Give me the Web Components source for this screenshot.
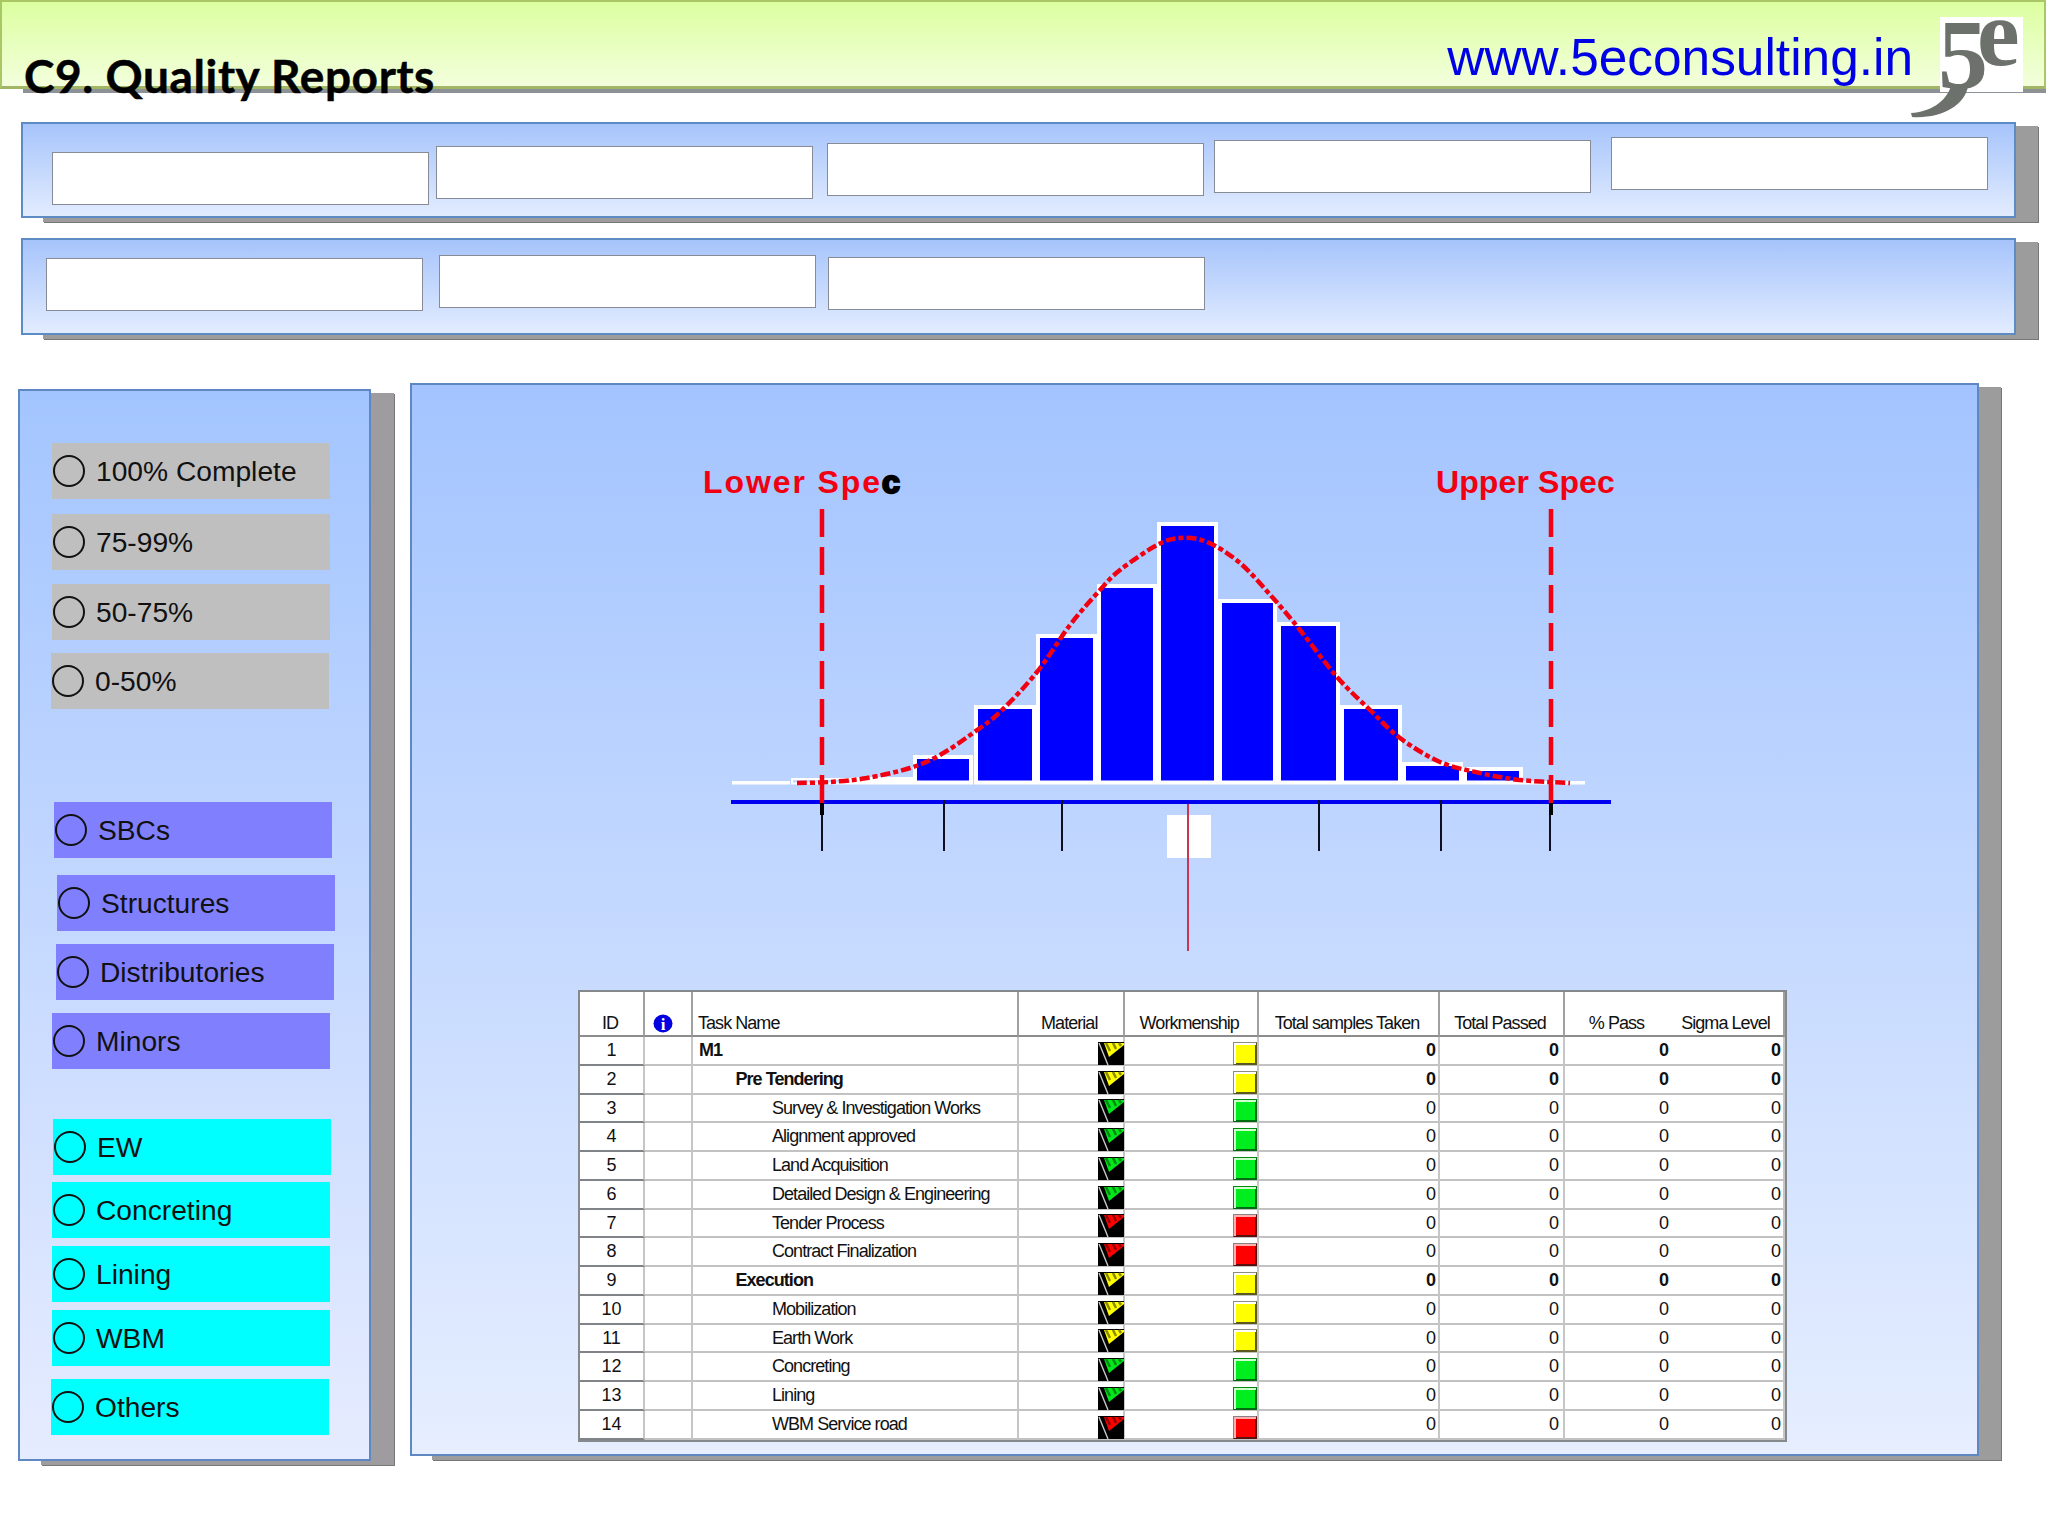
<!DOCTYPE html>
<html lang="en">
<head>
<meta charset="utf-8">
<title>C9. Quality Reports</title>
<style>
  html, body { margin: 0; background: #fff; }
  body { width: 2048px; height: 1536px; overflow: hidden; font-family: "Liberation Sans", Arial, sans-serif; }
  .work-row { display: flex; align-items: flex-start; margin-top: 48px; }
</style>
</head>
<body>
<page-header heading="C9. Quality Reports" site="www.5econsulting.in"></page-header>

<filter-band style="margin-top: 29px; height: 96px">
  <blank-field style="margin: 28px 0 0 29px"></blank-field>
  <blank-field style="margin: 22px 0 0 7px"></blank-field>
  <blank-field style="margin: 19px 0 0 14px"></blank-field>
  <blank-field style="margin: 16px 0 0 10px"></blank-field>
  <blank-field style="margin: 13px 0 0 20px"></blank-field>
</filter-band>
<filter-band style="margin-top: 20px; height: 97px">
  <blank-field style="margin: 18px 0 0 23px"></blank-field>
  <blank-field style="margin: 15px 0 0 16px"></blank-field>
  <blank-field style="margin: 17px 0 0 12px"></blank-field>
</filter-band>

<div class="work-row">
  <side-panel>
    <status-option tone="grey" style="margin: 52px 0 0 32px">100% Complete</status-option>
    <status-option tone="grey" style="margin: 15px 0 0 32px">75-99%</status-option>
    <status-option tone="grey" style="margin: 14px 0 0 32px">50-75%</status-option>
    <status-option tone="grey" style="margin: 13px 0 0 31px">0-50%</status-option>
    <status-option tone="violet" style="margin: 93px 0 0 34px">SBCs</status-option>
    <status-option tone="violet" style="margin: 17px 0 0 37px">Structures</status-option>
    <status-option tone="violet" style="margin: 13px 0 0 36px">Distributories</status-option>
    <status-option tone="violet" style="margin: 13px 0 0 32px">Minors</status-option>
    <status-option tone="cyan" style="margin: 50px 0 0 33px">EW</status-option>
    <status-option tone="cyan" style="margin: 7px 0 0 32px">Concreting</status-option>
    <status-option tone="cyan" style="margin: 8px 0 0 32px">Lining</status-option>
    <status-option tone="cyan" style="margin: 8px 0 0 32px">WBM</status-option>
    <status-option tone="cyan" style="margin: 13px 0 0 31px">Others</status-option>
  </side-panel>
  <main-panel>
    <quality-chart></quality-chart>
    <report-table></report-table>
  </main-panel>
</div>

<script>
class PageHeader extends HTMLElement {
  constructor() {
    super()
    this.attachShadow({ mode: 'open' })
    this.shadowRoot.innerHTML = `
      <style>
        :host { display: block; position: relative; height: 93px; width: 2046px; }
        .bar {
          box-sizing: border-box;
          height: 89px;
          display: flex;
          justify-content: space-between;
          border: 2px solid #a9c765;
          border-bottom: 3px solid #a3b665;
          background: linear-gradient(#dcffa0, #f3ffdc);
        }
        .strip {
          position: absolute;
          left: 23px;
          right: 0;
          top: 89px;
          height: 4px;
          background: #8d9296;
        }
        h1 {
          position: relative;
          z-index: 1;
          margin: 46px 0 0 22px;
          font: 700 46px/56px Lato, "Open Sans", sans-serif;
          letter-spacing: 0.6px;
          -webkit-text-stroke: 0.5px #000;
          color: #000;
          height: 0;
          white-space: nowrap;
        }
        .site {
          margin: 25px 131px 0 0;
          font: 51.4px/60px "Liberation Sans", Arial, sans-serif;
          color: #0000e6;
        }
        .logo {
          position: absolute;
          left: 1940px;
          top: 17px;
          width: 83px;
          height: 75px;
          background: #fff;
          color: #6c716c;
          font-family: "Liberation Serif", serif;
          font-weight: 700;
        }
        .logo span { position: absolute; display: block; white-space: nowrap; }
        .five { left: -2px; top: 3px; width: 37px; height: 70px; font-size: 100px; line-height: 70px; }
        .ee { left: 37px; top: -9px; width: 44px; height: 50px; font-size: 96px; line-height: 50px; }
        svg { position: absolute; left: 1905px; top: 80px; }
      </style>
      <div class="bar">
        <h1></h1>
        <div class="site"></div>
      </div>
      <div class="strip"></div>
      <div class="logo"><span class="five">5</span><span class="ee">e</span></div>
      <svg width="80" height="42" viewBox="1905 80 80 42">
        <path fill="#6c716c" d="M1968,86 C1965,106 1940,119 1912,117 L1911,113 C1930,112 1946,102 1951,86Z"/>
      </svg>
    `
  }

  connectedCallback() {
    this.shadowRoot.querySelector('h1').textContent = this.getAttribute('heading')
    this.shadowRoot.querySelector('.site').textContent = this.getAttribute('site')
  }
}

class FilterBand extends HTMLElement {
  constructor() {
    super()
    this.attachShadow({ mode: 'open' })
    this.shadowRoot.innerHTML = `
      <style>
        :host {
          display: flex;
          align-items: flex-start;
          box-sizing: border-box;
          width: 1995px;
          margin-left: 21px;
          border: 2px solid #5d8cc4;
          background: linear-gradient(#a6c4fb, #e2ecff);
          box-shadow: 22px 4px 0 0 #9c9c9c, 23px 5px 0 0 #777;
        }
      </style>
      <slot></slot>
    `
  }
}

class BlankField extends HTMLElement {
  constructor() {
    super()
    this.attachShadow({ mode: 'open' })
    this.shadowRoot.innerHTML = `
      <style>
        :host {
          display: block;
          box-sizing: border-box;
          flex: none;
          width: 377px;
          height: 53px;
          background: #fff;
          border: 1px solid #868b96;
        }
      </style>
    `
  }
}

class SidePanel extends HTMLElement {
  constructor() {
    super()
    this.attachShadow({ mode: 'open' })
    this.shadowRoot.innerHTML = `
      <style>
        :host {
          display: block;
          flex: none;
          box-sizing: border-box;
          width: 353px;
          height: 1072px;
          margin: 6px 0 0 18px;
          border: 2px solid #5f88c2;
          background: linear-gradient(#a3c5ff, #e6ecff);
          box-shadow: 23px 4px 0 0 #9e9c9e, 24px 5px 0 0 #777;
        }
      </style>
      <slot></slot>
    `
  }
}

class StatusOption extends HTMLElement {
  constructor() {
    super()
    this.attachShadow({ mode: 'open' })
    this.shadowRoot.innerHTML = `
      <style>
        :host {
          display: flex;
          align-items: center;
          gap: 11px;
          box-sizing: border-box;
          width: 278px;
          height: 56px;
          padding: 0 0 1px 1px;
          font: 28.2px/32px "Liberation Sans", Arial, sans-serif;
          color: #111;
        }
        :host([tone="grey"]) { background: #c0bfc0; }
        :host([tone="violet"]) { background: #8080ff; }
        :host([tone="cyan"]) { background: #00ffff; }
        .dot {
          box-sizing: border-box;
          flex: none;
          width: 32px;
          height: 32px;
          border: 2.5px solid #111;
          border-radius: 50%;
        }
      </style>
      <span class="dot"></span><slot></slot>
    `
  }
}

class MainPanel extends HTMLElement {
  constructor() {
    super()
    this.attachShadow({ mode: 'open' })
    this.shadowRoot.innerHTML = `
      <style>
        :host {
          display: block;
          flex: none;
          box-sizing: border-box;
          width: 1569px;
          height: 1073px;
          margin-left: 39px;
          border: 2px solid #5f88c2;
          background: linear-gradient(#a3c4ff, #e6eeff);
          box-shadow: 22px 4px 0 0 #9c9c9c, 23px 5px 0 0 #777;
        }
      </style>
      <slot></slot>
    `
  }
}

class QualityChart extends HTMLElement {
  constructor() {
    super()
    this.attachShadow({ mode: 'open' })
    const bars = [
      [732, 790, 781, 1], [791, 852, 778, 1], [852, 913, 777], [913, 973, 755],
      [974, 1036, 705], [1036, 1097, 634], [1097, 1157, 584], [1157, 1218, 522],
      [1218, 1277, 599], [1277, 1340, 622], [1340, 1402, 705], [1402, 1463, 762],
      [1463, 1523, 767], [1523, 1585, 781, 1],
    ]
    const curve = [
      [797, 783], [830, 782], [867, 778], [910, 768], [940, 755], [973, 733],
      [1000, 712], [1037, 672], [1070, 625], [1100, 590], [1120, 570], [1157, 545],
      [1180, 538], [1207, 542], [1240, 563], [1273, 598], [1300, 630], [1337, 677],
      [1370, 710], [1400, 738], [1440, 762], [1480, 773], [1520, 780], [1570, 783],
    ]
    const ticks = [822, 944, 1062, 1319, 1441, 1550]
    const barMarkup = bars
      .map(([left, right, top, hollow]) => {
        const inset = hollow ? 1 : 2
        return `<rect x="${left + inset}" y="${top + inset}" width="${right - left - inset * 2}"
          height="${784.5 - top - inset * 2}" fill="${hollow ? '#c8daff' : '#0000ff'}"
          stroke="#fff" stroke-width="${inset * 2}"/>`
      })
      .join('')
    const tickMarkup = ticks
      .map((x) => `<line x1="${x}" x2="${x}" y1="800" y2="851" stroke="#0c1020" stroke-width="2"/>`)
      .join('')

    this.shadowRoot.innerHTML = `
      <style>
        :host { display: block; height: 585px; }
        svg { display: block; }
        text { font: 700 32px "Liberation Sans", Arial, sans-serif; fill: #f00010; }
      </style>
      <svg width="1565" height="585" viewBox="412 385 1565 585">
        <text x="703" y="493" letter-spacing="1.9">Lower Spe<tspan stroke="#000" stroke-width="2.4" style="fill:#000">c</tspan></text>
        <text x="1436" y="493" letter-spacing="0.1">Upper Spec</text>
        ${barMarkup}
        <rect x="731" y="800" width="880" height="4" fill="#0000f0"/>
        ${tickMarkup}
        <rect x="820" y="803" width="4" height="12" fill="#000"/>
        <rect x="1549" y="803" width="4" height="12" fill="#000"/>
        <line x1="822" x2="822" y1="509" y2="803" stroke="#f00010" stroke-width="4.5" stroke-dasharray="28 10"/>
        <line x1="1551" x2="1551" y1="509" y2="803" stroke="#f00010" stroke-width="4.5" stroke-dasharray="28 10"/>
        <rect x="1167" y="815" width="44" height="43" fill="#fff"/>
        <line x1="1188" x2="1188" y1="804" y2="951" stroke="#cc3355" stroke-width="2"/>
        <path d="${QualityChart.smooth(curve)}" fill="none" stroke="#f00010" stroke-width="4.5"
          stroke-dasharray="10 3 5 3"/>
      </svg>
    `
  }

  // catmull-rom through the measured points
  static smooth(points) {
    let d = `M${points[0][0]},${points[0][1]}`
    for (let i = 0; i < points.length - 1; i++) {
      const p0 = points[i - 1] || points[i]
      const p1 = points[i]
      const p2 = points[i + 1]
      const p3 = points[i + 2] || p2
      const c1x = p1[0] + (p2[0] - p0[0]) / 6
      const c1y = p1[1] + (p2[1] - p0[1]) / 6
      const c2x = p2[0] - (p3[0] - p1[0]) / 6
      const c2y = p2[1] - (p3[1] - p1[1]) / 6
      d += ` C${c1x},${c1y} ${c2x},${c2y} ${p2[0]},${p2[1]}`
    }
    return d
  }
}

const toneColors = {
  yellow: { fill: '#ffff00', stripe: '#8a8a00' },
  green: { fill: '#00e81a', stripe: '#008a10' },
  red: { fill: '#ff0000', stripe: '#900000' },
}

class FlagIcon extends HTMLElement {
  constructor() {
    super()
    this.attachShadow({ mode: 'open' })
  }

  connectedCallback() {
    const { fill, stripe } = toneColors[this.getAttribute('tone')]
    this.shadowRoot.innerHTML = `
      <style>
        :host { display: block; width: 26px; height: 23px; flex: none; }
        svg { display: block; }
      </style>
      <svg width="26" height="23" viewBox="0 0 26 23">
        <rect width="26" height="23" fill="#000"/>
        <path d="M6,1 H26 V3 L11,15Z" fill="${fill}"/>
        <path d="M8,1 L12,9 M15,1 L18,7 M21,1 L23,4" stroke="${stripe}" stroke-width="2.5" fill="none"/>
        <path d="M1,1 L10,23" stroke="#c8c8c8" stroke-width="1.4"/>
      </svg>
    `
  }
}

const squareEdges = {
  yellow: { light: '#fff', mid: '#8c8c80', dark: '#5a5a20' },
  green: { light: '#d0ffd0', mid: '#008a10', dark: '#006a10' },
  red: { light: '#ffb0b0', mid: '#8c8080', dark: '#5a1010' },
}

class StatusSquare extends HTMLElement {
  constructor() {
    super()
    this.attachShadow({ mode: 'open' })
  }

  connectedCallback() {
    const tone = this.getAttribute('tone')
    const edge = squareEdges[tone]
    this.shadowRoot.innerHTML = `
      <style>
        :host {
          display: block;
          flex: none;
          box-sizing: border-box;
          width: 24px;
          height: 23px;
          border: 1.5px solid ${edge.dark};
          border-top-color: ${edge.mid};
          border-left-color: ${edge.mid};
          background: ${tone === 'green' ? '#00ee20' : toneColors[tone].fill};
          box-shadow: inset 2px 2px 0 0 ${edge.light}, inset -1px -1px 0 0 ${edge.dark};
        }
      </style>
    `
  }
}

class ReportTable extends HTMLElement {
  constructor() {
    super()
    this.attachShadow({ mode: 'open' })
    const rows = [
      ['M1', 0, 'yellow', true],
      ['Pre Tendering', 1, 'yellow', true],
      ['Survey & Investigation Works', 2, 'green'],
      ['Alignment approved', 2, 'green'],
      ['Land Acquisition', 2, 'green'],
      ['Detailed Design & Engineering', 2, 'green'],
      ['Tender Process', 2, 'red'],
      ['Contract Finalization', 2, 'red'],
      ['Execution', 1, 'yellow', true],
      ['Mobilization', 2, 'yellow'],
      ['Earth Work', 2, 'yellow'],
      ['Concreting', 2, 'green'],
      ['Lining', 2, 'green'],
      ['WBM Service road', 2, 'red'],
    ]
    const heads = ['ID', '', 'Task Name', 'Material', 'Workmenship', 'Total samples Taken', 'Total Passed', '% Pass', 'Sigma Level']
    const headMarkup = heads
      .map((text, i) => {
        if (i === 1) {
          return `<div class="head mid"><svg width="20" height="19" viewBox="0 0 20 19">
            <ellipse cx="10" cy="9.5" rx="9.5" ry="9" fill="#0000e0"/>
            <text x="10" y="15.5" text-anchor="middle">i</text></svg></div>`
        }
        return `<div class="head ${i === 2 ? '' : 'mid'}">${text}</div>`
      })
      .join('')
    const rowMarkup = rows
      .map(([name, depth, tone, bold], i) => {
        const weight = bold ? 'bold' : ''
        const zeros = [0, 1, 2, 3].map(() => `<div class="cell num ${weight}">0</div>`).join('')
        return `
          <div class="cell id">${i + 1}</div>
          <div class="cell"></div>
          <div class="cell ${weight}" style="padding-left: ${6 + depth * 36.5}px">${name.replace('&', '&amp;')}</div>
          <div class="cell icon"><flag-icon tone="${tone}"></flag-icon></div>
          <div class="cell icon"><status-square tone="${tone}"></status-square></div>
          ${zeros}`
      })
      .join('')

    this.shadowRoot.innerHTML = `
      <style>
        :host {
          display: grid;
          box-sizing: border-box;
          width: 1209px;
          margin: 20px 0 0 166px;
          grid-template-columns: 65px 48px 326px 105.5px 134.5px 181px 125px 106px 114px;
          grid-template-rows: 45px repeat(14, 28.75px);
          border: 2px solid #85898c;
          background: #fff;
          font: 18px/18px "Liberation Sans", Arial, sans-serif;
          letter-spacing: -0.95px;
          color: #111;
        }
        .head, .cell {
          box-sizing: border-box;
          border-right: 2px solid #c6c6c6;
          border-bottom: 2px solid #c2c2c2;
          white-space: nowrap;
          min-width: 0;
        }
        .head {
          display: flex;
          align-items: flex-end;
          padding: 0 0 3px 5px;
          border-right-color: #a0a0a0;
          border-bottom-color: #8c8c8c;
        }
        .mid { justify-content: center; padding-left: 0; padding-right: 3px; }
        .head:nth-child(1) { padding-right: 0; }
        .head:nth-child(9), .cell:nth-child(9n) { border-right: 0; }
        .head svg { display: block; margin: 0 7px -1px 0; }
        .head text { font: 700 17px "Liberation Serif", serif; fill: #fff; letter-spacing: 0; }
        .cell { padding-top: 4px; }
        .id { text-align: center; border-bottom-color: #808488; letter-spacing: 0; }
        .num { text-align: right; padding-right: 2px; letter-spacing: 0; }
        .num:nth-child(9n+8) { padding-right: 4px; }
        .bold { font-weight: 700; }
        .icon {
          display: flex;
          justify-content: flex-end;
          align-items: flex-end;
          padding-top: 0;
          overflow: visible;
        }
        .icon > * { margin-bottom: -1px; }
        .icon > flag-icon { margin-right: -1px; }
      </style>
      ${headMarkup}${rowMarkup}
    `
  }
}

customElements.define('page-header', PageHeader)
customElements.define('filter-band', FilterBand)
customElements.define('blank-field', BlankField)
customElements.define('side-panel', SidePanel)
customElements.define('status-option', StatusOption)
customElements.define('main-panel', MainPanel)
customElements.define('quality-chart', QualityChart)
customElements.define('flag-icon', FlagIcon)
customElements.define('status-square', StatusSquare)
customElements.define('report-table', ReportTable)
</script>
</body>
</html>
